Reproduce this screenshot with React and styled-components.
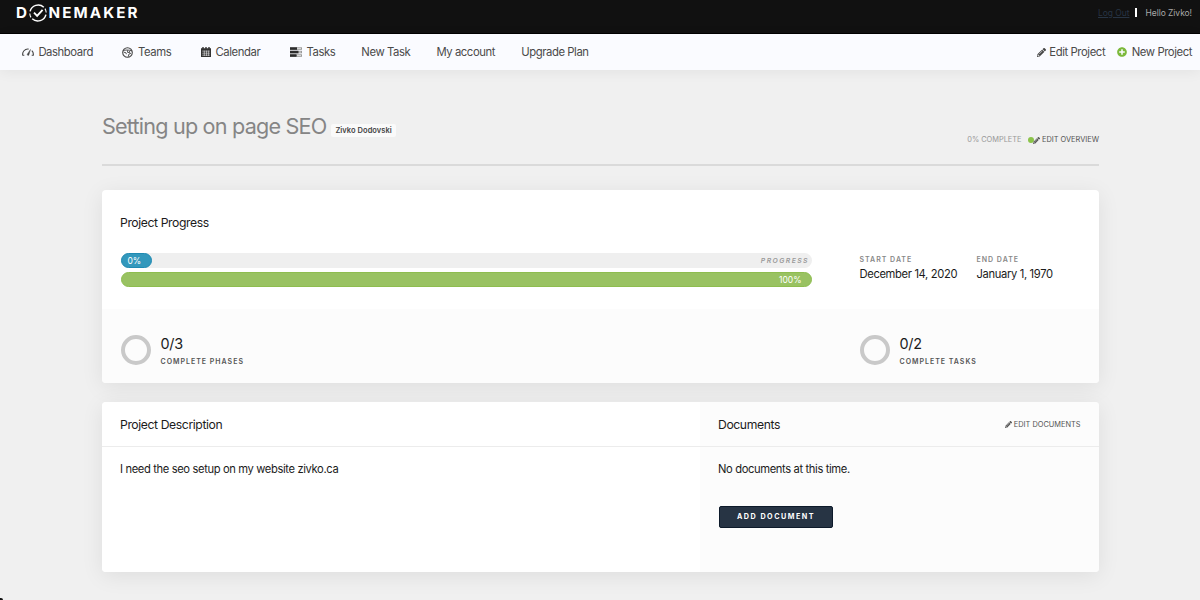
import React from 'react'
import styled, { createGlobalStyle } from 'styled-components'
import { FaPencilAlt, FaPlusCircle } from 'react-icons/fa'

const GlobalStyle = createGlobalStyle`
  * {
    box-sizing: border-box;
  }
  body {
    margin: 0;
    background: #f0f0f0;
    color: #1b1b1b;
    font-family: Inter, 'Liberation Sans', sans-serif;
    overflow: hidden;
  }
`

const Page = styled.div`
  position: relative;
  height: 600px;
  overflow: hidden;
`

const TopBar = styled.header`
  height: 34px;
  padding: 0 8px 0 16px;
  background: #111;
  border-bottom: 1px solid #000;
  display: flex;
  justify-content: space-between;
  align-items: flex-start;
`

const Logo = styled.div`
  display: flex;
  align-items: center;
  height: 26px;
  color: #fff;
  font-size: 15.2px;
  font-weight: 650;
  letter-spacing: 2.1px;
  line-height: 26px;
  text-rendering: geometricPrecision;

  svg {
    margin: 0 1px 0 -1.5px;
  }
`

const Account = styled.div`
  display: flex;
  align-items: center;
  height: 25px;
  font-size: 8.5px;
  letter-spacing: -0.05px;
  color: #a9a9a9;
`

const LogOut = styled.a`
  color: #273444;
  text-decoration: underline;
`

const Divider = styled.span`
  width: 1.5px;
  height: 9px;
  margin: 0 8.5px 0 6px;
  background: #fff;
`

const Nav = styled.nav`
  height: 36px;
  padding: 0 8px 0 18.3px;
  background: #fafbff;
  box-shadow: 0 2px 14px rgba(0, 0, 0, 0.06);
  display: flex;
  justify-content: space-between;
  align-items: center;
`

const NavGroup = styled.div`
  display: flex;
  align-items: center;
  gap: ${({ $gap }) => $gap}px;
`

const NavItem = styled.a`
  display: flex;
  align-items: center;
  gap: ${({ $gap }) => $gap || 4.6}px;
  color: #4a4a4a;
  font-size: 11.3px;
  letter-spacing: -0.42px;
  line-height: 36px;
  white-space: nowrap;

  svg {
    margin-left: ${({ $inset }) => ($inset ? 3.5 : 0)}px;
    color: ${({ $iconColor }) => $iconColor || '#444'};
  }
`

const Container = styled.main`
  width: 997px;
  margin-left: 102px;
`

const TitleRow = styled.div`
  height: 96px;
  margin-bottom: 24px;
  padding-top: 41px;
  border-bottom: 2px solid #dadada;
  display: flex;
  justify-content: space-between;
`

const TitleGroup = styled.div`
  display: flex;
  align-items: flex-start;
`

const Title = styled.h1`
  margin: 0;
  color: #858585;
  font-size: 21.6px;
  font-weight: 370;
  letter-spacing: -0.8px;
  line-height: 30px;
`

const Badge = styled.span`
  height: 13px;
  margin: 13px 0 0 4.5px;
  padding: 0 4.5px;
  border-radius: 2px;
  background: #fafafa;
  color: #444;
  font-size: 7.5px;
  font-weight: 600;
  letter-spacing: 0.05px;
  line-height: 14px;
`

const Overview = styled.div`
  display: flex;
  align-items: center;
  height: 12px;
  margin-top: 23px;
  color: #999;
  font-size: 7.4px;
  line-height: 12px;
`

const EditLink = styled.a`
  display: flex;
  align-items: center;
  gap: 2px;
  color: #555;
  font-size: 7.4px;
`

const Dot = styled.span`
  width: 6px;
  height: 6px;
  margin: 0 -1px 0 6.5px;
  border-radius: 50%;
  background: #8bc34a;
`

const Card = styled.section`
  border-radius: 4px;
  background: #fff;
  box-shadow: 0 4px 22px rgba(0, 0, 0, 0.08);
  overflow: hidden;
`

const ProgressTop = styled.div`
  height: 119px;
  padding: 25px 18px 0;
`

const Heading = styled.h2`
  margin: 0;
  font-size: 12.2px;
  font-weight: 400;
  letter-spacing: -0.4px;
  line-height: 16px;
`

const ProgressBody = styled.div`
  display: flex;
  margin-top: 22px;
`

const Bars = styled.div`
  flex: 0 0 691px;
  margin: 0 48px 0 0.5px;
  display: flex;
  flex-direction: column;
  gap: 3.5px;
`

const Track = styled.div`
  height: 15px;
  border-radius: 8px;
  background: #efefef;
  display: flex;
  justify-content: space-between;
  align-items: center;
`

const Fill = styled.div`
  height: 15px;
  padding: 0 ${({ $right }) => ($right ? '9px' : '6px')};
  border: 1px solid ${({ $edge }) => $edge};
  border-radius: 8px;
  background: ${({ $color }) => $color};
  color: #fff;
  font-size: 8.5px;
  line-height: 15.5px;
  text-align: ${({ $right }) => ($right ? 'right' : 'left')};
`

const TrackLabel = styled.span`
  margin-right: 2.5px;
  color: #999;
  font-size: 6.8px;
  font-style: italic;
  font-weight: 600;
  letter-spacing: 1.45px;
`

const Dates = styled.div`
  display: grid;
  grid-template-columns: 117px 100px;
  padding-top: 1px;
`

const Caption = styled.div`
  color: ${({ $dark }) => ($dark ? '#555' : '#888')};
  font-size: 7px;
  font-weight: 600;
  letter-spacing: 1px;
  line-height: 12px;
  white-space: nowrap;
`

const DateText = styled.div`
  font-size: 11.2px;
  letter-spacing: -0.35px;
  line-height: 16px;
  white-space: nowrap;
`

const Totals = styled.div`
  height: 74px;
  padding: 25px 18px 0 19px;
  background: #fcfcfc;
  display: grid;
  grid-template-columns: 739px 1fr;
`

const Total = styled.div`
  display: flex;
  gap: 9.5px;

  ${Caption} {
    margin-top: 2px;
  }
`

const Ring = styled.div`
  width: 30px;
  height: 30px;
  margin-top: 1px;
  border: 4px solid #c9c9c9;
  border-radius: 50%;
`

const Count = styled.div`
  font-size: 14.4px;
  letter-spacing: -0.3px;
  line-height: 20px;
`

const DetailCard = styled(Card)`
  height: 170px;
  margin-top: 19px;
  display: grid;
  grid-template-columns: 598px 1fr;
`

const Panel = styled.div`
  background: ${({ $shade }) => ($shade ? '#fcfcfc' : '#fff')};
`

const PanelHead = styled.div`
  height: 45px;
  padding: 2px 18.5px 0 18px;
  border-bottom: 1px solid #ececec;
  display: flex;
  align-items: center;
  justify-content: space-between;

  ${EditLink} {
    margin-top: -1px;
  }
`

const PanelBody = styled.div`
  padding: 13px 18px;
`

const Text = styled.p`
  margin: 0;
  font-size: 11.2px;
  letter-spacing: -0.37px;
  line-height: 18px;
`

const Button = styled.button`
  width: 114px;
  height: 22px;
  margin: 28px 0 0 0.5px;
  padding: 0 0 0 1px;
  border: 1px solid #0d1a2a;
  border-radius: 2px;
  background: #273444;
  color: #fff;
  font-family: inherit;
  font-size: 7.2px;
  font-weight: 700;
  letter-spacing: 1.5px;
  line-height: 20px;
`

const Corner = styled.span`
  position: absolute;
  left: 0;
  bottom: 0;
  width: 3px;
  height: 2px;
  border-top-right-radius: 3px;
  background: #111;
`

const LogoMark = () => (
  <svg width="20" height="20" viewBox="0 0 20 20" fill="none" stroke="#fff">
    <path d="M2.1 8.4A8.3 8.3 0 0 1 15.8 4.2" strokeWidth="1.5" />
    <path d="M17.9 11.6A8.3 8.3 0 0 1 4.2 15.8" strokeWidth="1.5" />
    <path d="M1.8 10.4A8.3 8.3 0 0 0 3 14.4M18.2 9.6A8.3 8.3 0 0 0 17 5.6" strokeWidth="1.1" />
    <path d="M6 9.7l3.1 3.1 5.5-6" strokeWidth="1.9" />
  </svg>
)

const GaugeIcon = () => (
  <svg width="12" height="10" viewBox="0 0 12 10" fill="none" stroke="currentColor">
    <path d="M.8 8.5A5.2 5.2 0 0 1 6.6 2.1M9.8 3.6a5.2 5.2 0 0 1 1.4 4.9M.8 8.3h1.5M9.7 8.3h1.5" strokeWidth="1.1" />
    <path d="M8.5 2.4L5.2 7.3a1 1 0 0 0 1.6.9z" fill="currentColor" strokeWidth=".4" />
  </svg>
)

const TeamsIcon = () => (
  <svg width="11" height="11" viewBox="0 0 11 11" fill="none" stroke="currentColor">
    <circle cx="5.5" cy="5.5" r="4.8" strokeWidth="1.1" />
    <path d="M1 3.8C3 2.7 7.6 2.7 10 4M1.8 5.2l2.2.6.4 1.4M5.6 3.2v2.2l2 .2V4M9 6.2L7 7l-.8 2.8" strokeWidth=".9" />
  </svg>
)

const CalendarIcon = () => (
  <svg width="10" height="10" viewBox="0 0 10 10">
    <path d="M0 1.2h1.3V0h1.4v1.2h1.6V0h1.4v1.2h1.6V0h1.4v1.2H10V10H0z" fill="#333" />
    <path d="M1.2 4.1h7.6M1.2 6.2h7.6M1.2 8.2h7.6M3.3 3.6V9M5.5 3.6V9M7.6 3.6V9" stroke="#fafbff" strokeWidth=".5" />
  </svg>
)

const TasksIcon = () => (
  <svg width="12" height="10" viewBox="0 0 12 10">
    {[0.3, 3.8, 7.3].map((y, i) => (
      <g key={y}>
        <rect x="0" y={y} width="12" height="2.5" fill="#999" />
        <rect x="7" y={y + 0.8} width="4" height=".9" fill="#ddd" />
        <rect x="0" y={y} width={[7, 8.5, 6.5][i]} height="2.5" fill="#2c2c2c" />
      </g>
    ))}
  </svg>
)

const links = [
  { label: 'Dashboard', icon: <GaugeIcon /> },
  { label: 'Teams', icon: <TeamsIcon /> },
  { label: 'Calendar', icon: <CalendarIcon /> },
  { label: 'Tasks', icon: <TasksIcon /> },
  { label: 'New Task' },
  { label: 'My account' },
  { label: 'Upgrade Plan' },
]

const totals = [
  { count: '0/3', label: 'COMPLETE PHASES' },
  { count: '0/2', label: 'COMPLETE TASKS' },
]

const App = () => {
  return (
    <Page>
      <GlobalStyle />
      <TopBar>
        <Logo>
          D<LogoMark />NEMAKER
        </Logo>
        <Account>
          <LogOut>Log Out</LogOut>
          <Divider />
          <span>Hello Zivko!</span>
        </Account>
      </TopBar>
      <Nav>
        <NavGroup $gap={26.1}>
          {links.map((link) => (
            <NavItem key={link.label} $inset>
              {link.icon}
              {link.label}
            </NavItem>
          ))}
        </NavGroup>
        <NavGroup $gap={12}>
          <NavItem $gap={3}>
            <FaPencilAlt size={9} />
            Edit Project
          </NavItem>
          <NavItem $iconColor="#7cb93b">
            <FaPlusCircle size={10} />
            New Project
          </NavItem>
        </NavGroup>
      </Nav>
      <Container>
        <TitleRow>
          <TitleGroup>
            <Title>Setting up on page SEO</Title>
            <Badge>Zivko Dodovski</Badge>
          </TitleGroup>
          <Overview>
            0% COMPLETE
            <Dot />
            <EditLink>
              <FaPencilAlt size={7} />
              EDIT OVERVIEW
            </EditLink>
          </Overview>
        </TitleRow>
        <Card>
          <ProgressTop>
            <Heading>Project Progress</Heading>
            <ProgressBody>
              <Bars>
                <Track>
                  <Fill $color="#3398bc" $edge="#1f8ab2" style={{ width: 31 }}>0%</Fill>
                  <TrackLabel>PROGRESS</TrackLabel>
                </Track>
                <Fill $color="#99c262" $edge="#8ebd4f" $right>100%</Fill>
              </Bars>
              <Dates>
                <div>
                  <Caption>START DATE</Caption>
                  <DateText>December 14, 2020</DateText>
                </div>
                <div>
                  <Caption>END DATE</Caption>
                  <DateText>January 1, 1970</DateText>
                </div>
              </Dates>
            </ProgressBody>
          </ProgressTop>
          <Totals>
            {totals.map((total) => (
              <Total key={total.label}>
                <Ring />
                <div>
                  <Count>{total.count}</Count>
                  <Caption $dark>{total.label}</Caption>
                </div>
              </Total>
            ))}
          </Totals>
        </Card>
        <DetailCard>
          <Panel>
            <PanelHead>
              <Heading>Project Description</Heading>
            </PanelHead>
            <PanelBody>
              <Text>I need the seo setup on my website zivko.ca</Text>
            </PanelBody>
          </Panel>
          <Panel $shade>
            <PanelHead>
              <Heading>Documents</Heading>
              <EditLink>
                <FaPencilAlt size={7} />
                EDIT DOCUMENTS
              </EditLink>
            </PanelHead>
            <PanelBody>
              <Text>No documents at this time.</Text>
              <Button>ADD DOCUMENT</Button>
            </PanelBody>
          </Panel>
        </DetailCard>
      </Container>
      <Corner />
    </Page>
  )
}

export default App
